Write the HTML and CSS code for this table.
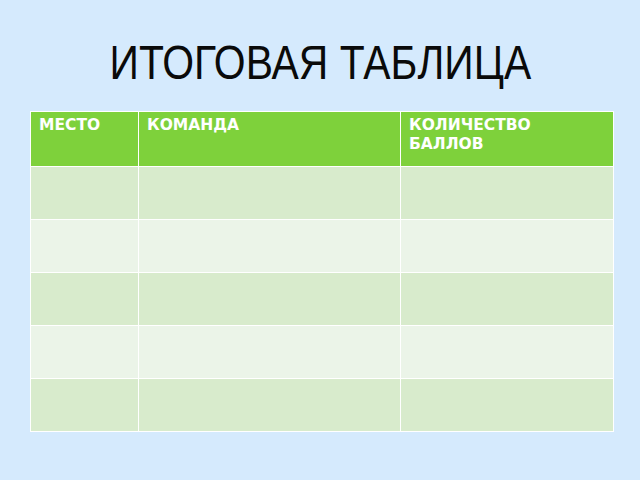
FILE: index.html
```html
<!DOCTYPE html>
<html lang="ru">
<head>
<meta charset="utf-8">
<link rel="stylesheet" href="styles.css">
</head>
<body>
<div class="slide">
  <h1 class="title"><span class="title-text">ИТОГОВАЯ ТАБЛИЦА</span></h1>
  <table class="results">
    <thead>
      <tr>
        <th class="c1">МЕСТО</th>
        <th class="c2">КОМАНДА</th>
        <th class="c3">КОЛИЧЕСТВО<br>БАЛЛОВ</th>
      </tr>
    </thead>
    <tbody>
      <tr class="odd"><td></td><td></td><td></td></tr>
      <tr class="even"><td></td><td></td><td></td></tr>
      <tr class="odd"><td></td><td></td><td></td></tr>
      <tr class="even"><td></td><td></td><td></td></tr>
      <tr class="odd"><td></td><td></td><td></td></tr>
    </tbody>
  </table>
</div>
</body>
</html>
```
FILE: styles.css
```css
html, body {
  margin: 0;
  padding: 0;
  background: #d5eafd;
}
.slide {
  width: 640px;
  height: 480px;
  padding-top: 35px;
  box-sizing: border-box;
}
.title {
  margin: 0;
  height: 76px;
  text-align: center;
  font-family: "Liberation Sans", Arial, sans-serif;
  font-weight: normal;
  font-size: 48px;
  line-height: 56px;
  color: #0a0a0a;
}
.title-text {
  display: inline-block;
  transform: scaleX(0.852);
  transform-origin: center;
  white-space: nowrap;
}
.results {
  margin-left: 30px;
  border-collapse: collapse;
  width: 583px;
  table-layout: fixed;
}
.results th, .results td {
  border: 1px solid #ffffff;
  padding: 0;
}
.results th {
  background: #7ed13b;
  height: 55px;
  vertical-align: top;
  text-align: left;
  font-family: "DejaVu Sans", Verdana, sans-serif;
  font-weight: bold;
  font-size: 15.5px;
  line-height: 19px;
  color: #ffffff;
  padding: 4px 7px 0 8px;
  box-sizing: border-box;
}
.c1 { width: 108px; }
.c2 { width: 262px; }
.c3 { width: 213px; }
.results td {
  height: 52px;
}
.odd td { background: #d8ebcc; }
.even td { background: #ebf4e8; }
```
